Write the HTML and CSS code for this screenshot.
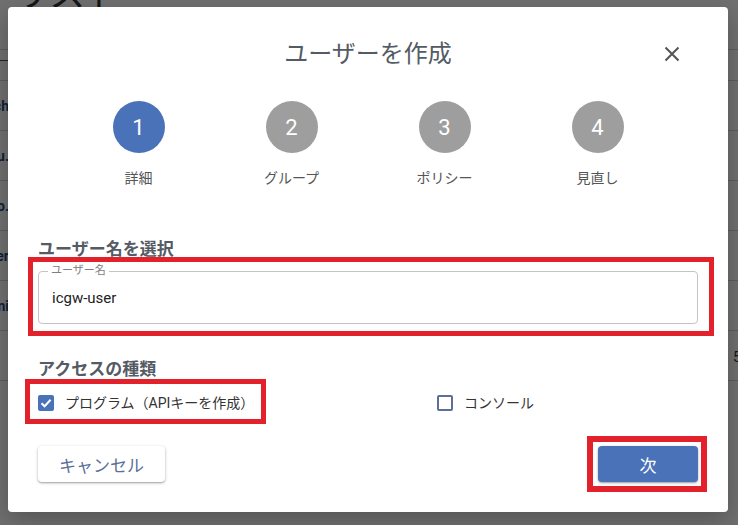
FILE: index.html
```html
<!DOCTYPE html>
<html lang="ja">
<head>
<meta charset="utf-8">
<title>ユーザーを作成</title>
<link rel="stylesheet" href="styles.css">
</head>
<body>
<div class="page">
  <div class="page-head"><h1 class="page-title">ユーザーリスト</h1></div>
  <div class="table">
    <div class="thead"><span class="cell-l thead-txt">ユーザー</span></div>
    <div class="row"><span class="cell-l">tech</span></div>
    <div class="row"><span class="cell-l">yu.</span></div>
    <div class="row"><span class="cell-l">yo.</span></div>
    <div class="row"><span class="cell-l">user</span></div>
    <div class="row"><span class="cell-l">mini</span></div>
    <div class="foot">5 件中 1-5</div>
  </div>
</div>
<div class="overlay"></div>

<div class="dialog">
  <div class="dlg-head">
    <h2 class="dlg-title">ユーザーを作成</h2>
    <svg class="close" viewBox="0 0 16 16" width="16" height="16"><path d="M1.5 1.5 L14.5 14.5 M14.5 1.5 L1.5 14.5" stroke="#555" stroke-width="2" fill="none"/></svg>
  </div>

  <div class="stepper">
    <div class="step"><div class="step-circle active">1</div><div class="step-label">詳細</div></div>
    <div class="step"><div class="step-circle">2</div><div class="step-label">グループ</div></div>
    <div class="step"><div class="step-circle">3</div><div class="step-label">ポリシー</div></div>
    <div class="step"><div class="step-circle">4</div><div class="step-label">見直し</div></div>
  </div>

  <h3 class="section-title first">ユーザー名を選択</h3>
  <div class="field">
    <span class="field-label">ユーザー名</span>
    <span class="field-value">icgw-user</span>
  </div>

  <h3 class="section-title second">アクセスの種類</h3>
  <div class="checks">
    <label class="check">
      <span class="box on"><svg viewBox="0 0 16 16" width="16" height="16"><path d="M3.5 8.2 L6.6 11.2 L12.6 4.8" stroke="#fff" stroke-width="2" fill="none"/></svg></span>
      <span>プログラム（APIキーを作成）</span>
    </label>
    <label class="check">
      <span class="box off"></span>
      <span>コンソール</span>
    </label>
  </div>

  <div class="actions">
    <button class="btn btn-cancel">キャンセル</button>
    <button class="btn btn-next">次</button>
  </div>

  <div class="mark mark-name"></div>
  <div class="mark mark-api"></div>
  <div class="mark mark-next"></div>
</div>
</body>
</html>
```
FILE: styles.css
```css
* { box-sizing: border-box; }
html, body { margin: 0; padding: 0; }
body {
  width: 738px;
  height: 525px;
  overflow: hidden;
  position: relative;
  background: #fff;
  font-family: Roboto, "Noto Sans CJK JP", sans-serif;
}

/* background page */
.page { width: 738px; }
.page-head { height: 49px; display: flow-root; }
.page-title {
  margin: -23px 0 0 -130px;
  font-size: 36px;
  line-height: 36px;
  font-weight: 400;
  color: #333;
  white-space: nowrap;
}
.table { width: 738px; }
.thead {
  height: 32px;
  border-top: 1px solid #d4d4d4;
  border-bottom: 1px solid #d4d4d4;
  display: flex;
  align-items: flex-start;
}
.row {
  height: 50px;
  border-bottom: 1px solid #d4d4d4;
  display: flex;
  align-items: center;
}
.cell-l {
  width: 9px;
  display: flex;
  justify-content: flex-end;
  white-space: nowrap;
  font-size: 14px;
  font-weight: 700;
  color: #2c4a86;
}
.thead-txt { font-weight: 400; color: #555; font-size: 11px; margin-top: 2px; }
.foot {
  height: 50px;
  border-bottom: 1px solid #d4d4d4;
  padding-left: 733px;
  display: flex;
  align-items: center;
  white-space: nowrap;
  font-size: 14px;
  color: #333;
}

.overlay {
  position: absolute;
  inset: 0;
  background: rgba(0, 0, 0, 0.56);
}

/* dialog */
.dialog {
  position: absolute;
  left: 8px;
  top: 7px;
  width: 720px;
  height: 505px;
  background: #fff;
  border-radius: 4px;
  padding: 0 30px;
  display: flex;
  flex-direction: column;
  box-shadow: 0 8px 24px rgba(0, 0, 0, 0.25);
}
.dlg-head {
  display: grid;
  grid-template-columns: 1fr auto 1fr;
  align-items: center;
  margin-top: 31px;
  height: 32px;
}
.dlg-title {
  grid-column: 2;
  margin: 0;
  font-size: 24px;
  line-height: 32px;
  font-weight: 400;
  color: #545b64;
}
.close {
  grid-column: 3;
  justify-self: end;
  margin-right: 18px;
}

.stepper {
  display: grid;
  grid-template-columns: repeat(4, 153px);
  margin: 31px auto 0;
}
.step {
  display: flex;
  flex-direction: column;
  align-items: center;
}
.step-circle {
  width: 52px;
  height: 52px;
  border-radius: 50%;
  background: #9e9e9e;
  color: #fff;
  font-size: 22px;
  display: flex;
  align-items: center;
  justify-content: center;
}
.step-circle.active { background: #4a72b9; }
.step-label {
  margin-top: 15px;
  font-size: 14px;
  line-height: 20px;
  color: #555;
}

.section-title {
  margin: 0;
  font-size: 17px;
  line-height: 24px;
  font-weight: 700;
  color: #545b64;
}
.section-title.first { margin-top: 49px; }
.section-title.second { margin-top: 33px; }

.field {
  position: relative;
  margin-top: 10px;
  height: 53px;
  border: 1px solid #c4c4c4;
  border-radius: 4px;
  display: flex;
  align-items: center;
  padding-left: 13px;
}
.field-label {
  position: absolute;
  top: -8px;
  left: 9px;
  padding: 0 3px;
  background: #fff;
  font-size: 11px;
  line-height: 14px;
  color: #808080;
}
.field-value {
  font-size: 15px;
  color: #222;
}

.checks {
  display: grid;
  grid-template-columns: 399px 1fr;
  margin-top: 10px;
}
.check {
  display: flex;
  align-items: center;
  gap: 11px;
  font-size: 14px;
  line-height: 24px;
  color: #333;
}
.box {
  width: 16px;
  height: 16px;
  border-radius: 2px;
  display: block;
}
.box svg { display: block; }
.box.on { background: #4a72b9; }
.box.off { border: 2px solid #5b6f98; }

.actions {
  display: flex;
  justify-content: space-between;
  margin-top: 31px;
}
.btn {
  height: 36px;
  border: none;
  border-radius: 4px;
  font-family: inherit;
  font-size: 17px;
  box-shadow: 0 1px 3px rgba(0, 0, 0, 0.3), 0 1px 1px rgba(0, 0, 0, 0.12);
}
.btn-cancel { width: 127px; background: #fff; color: #5a6e9a; }
.btn-next { width: 100px; background: #4a72b9; color: #fff; }

/* red annotation frames */
.mark {
  position: absolute;
  border: 5px solid #e3212b;
}
.mark-name { left: 20px; top: 250px; width: 686px; height: 79px; }
.mark-api { left: 17px; top: 372px; width: 241px; height: 45px; }
.mark-next { left: 579px; top: 429px; width: 120px; height: 56px; border-width: 6px; }
```
